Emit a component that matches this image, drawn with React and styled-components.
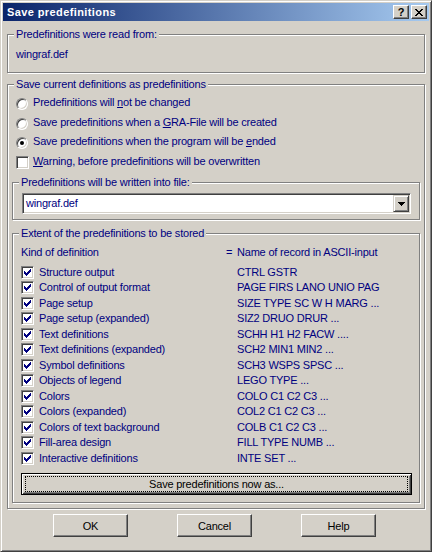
import React from 'react';
import styled, { createGlobalStyle } from 'styled-components';

const FACE = '#D4D0C8';
const NAVY = '#000080';
const FONT = '"Liberation Sans", Arial, sans-serif';

const Global = createGlobalStyle`
  html, body { margin: 0; padding: 0; background: ${FACE}; }
  body { font-family: ${FONT}; font-size: 11px; letter-spacing: -0.2px; }
  * { box-sizing: border-box; }
`;

const Window = styled.div`
  width: 432px;
  height: 552px;
  background: ${FACE};
  border: 1px solid;
  border-color: ${FACE} #404040 #404040 ${FACE};
  box-shadow: inset 1px 1px #fff, inset -1px -1px #808080;
  padding: 2px;
  display: flex;
  flex-direction: column;
`;

const TitleBar = styled.div`
  height: 18px;
  flex: none;
  display: flex;
  align-items: center;
  padding: 0 2px 0 4px;
  background: linear-gradient(to right, #0a246a, #a6caf0);
`;

const TitleText = styled.span`
  color: #fff;
  font-weight: bold;
  font-size: 11px;
  line-height: 18px;
  letter-spacing: 0.4px;
`;

const TitleButtons = styled.div`
  margin-left: auto;
  display: flex;
  gap: 2px;
`;

const TitleButton = styled.div`
  width: 16px;
  height: 14px;
  background: ${FACE};
  border: 1px solid;
  border-color: #fff #404040 #404040 #fff;
  box-shadow: inset -1px -1px #808080, inset 1px 1px ${FACE};
  display: flex;
  align-items: center;
  justify-content: center;
  color: #000;
  font-weight: bold;
  font-size: 11px;
  line-height: 12px;
  letter-spacing: 0;
`;

const Body = styled.div`
  flex: 1;
  display: flex;
  flex-direction: column;
  padding: 0 4px;
`;

const Group = styled.div`
  position: relative;
  margin-top: ${p => p.$mt}px;
  border: 1px solid #808080;
  box-shadow: inset 1px 1px #fff, 1px 1px #fff;
  padding: ${p => p.$pad};
  display: flex;
  flex-direction: column;
`;

const Legend = styled.span`
  position: absolute;
  top: -7px;
  left: 6px;
  padding: 0 2px;
  background: ${FACE};
  color: ${NAVY};
  line-height: 13px;
  white-space: nowrap;
`;

const Label = styled.span`
  color: ${NAVY};
  line-height: 13px;
  white-space: nowrap;
  u { text-decoration: underline; text-underline-offset: 1px; }
`;

const OptionRow = styled.div`
  height: 19.5px;
  display: flex;
  align-items: center;
  padding-left: 4px;
  gap: ${p => p.$gap || 5}px;
`;

const RadioCircle = styled.span`
  flex: none;
  width: 12px;
  height: 12px;
  margin-top: 3px;
  border-radius: 50%;
  background: #fff;
  border: 1px solid;
  border-color: #808080 #fff #fff #808080;
  box-shadow: inset 1px 1px #404040, inset -1px -1px ${FACE};
  display: flex;
  align-items: center;
  justify-content: center;
  &::after {
    content: '';
    width: 4px;
    height: 4px;
    border-radius: 50%;
    background: ${p => (p.$on ? '#000' : 'transparent')};
  }
`;

const CheckBoxFrame = styled.span`
  flex: none;
  width: 13px;
  height: 13px;
  margin-top: ${p => p.$mt || 0}px;
  background: #fff;
  border: 1px solid;
  border-color: #808080 #fff #fff #808080;
  box-shadow: inset 1px 1px #404040, inset -1px -1px ${FACE};
  display: flex;
  align-items: center;
  justify-content: center;
`;

const Combo = styled.div`
  height: 21px;
  display: flex;
  background: #fff;
  border: 1px solid;
  border-color: #808080 #fff #fff #808080;
  box-shadow: inset 1px 1px #404040, inset -1px -1px ${FACE};
  padding: 1px;
`;

const ComboText = styled.span`
  flex: 1;
  color: ${NAVY};
  line-height: 17px;
  padding-left: 2px;
`;

const DropButton = styled.span`
  flex: none;
  width: 16px;
  height: 17px;
  background: ${FACE};
  border: 1px solid;
  border-color: ${FACE} #404040 #404040 ${FACE};
  box-shadow: inset 1px 1px #fff, inset -1px -1px #808080;
  display: flex;
  align-items: center;
  justify-content: center;
`;

const Table = styled.div`
  display: grid;
  grid-template-columns: 205px 11px 1fr;
  grid-template-rows: 15.5px 4px;
  grid-auto-rows: 15.5px;
  align-items: center;
`;

const HeaderGap = styled.div`
  grid-column: 1 / -1;
  height: 4px;
`;

const Cell = styled.div`
  display: flex;
  align-items: center;
  gap: ${p => p.$gap || 0}px;
  color: ${NAVY};
  line-height: 13px;
  white-space: nowrap;
  grid-column: ${p => p.$col || 'auto'};
`;

const DefaultButton = styled.button`
  position: relative;
  margin-top: 7px;
  height: 22px;
  width: 100%;
  padding: 0;
  border: 1px solid #000;
  background: ${FACE};
  box-shadow: inset 1px 1px #fff, inset -1px -1px #404040,
    inset 2px 2px ${FACE}, inset -2px -2px #808080;
  font-family: ${FONT};
  font-size: 11px;
  letter-spacing: -0.2px;
  color: #000;
  &::after {
    content: '';
    position: absolute;
    inset: 2px 3px;
    border: 1px dotted #000;
  }
`;

const ButtonRow = styled.div`
  margin-top: 5px;
  margin-left: 46px;
  display: flex;
  gap: 49px;
`;

const PushButton = styled.button`
  width: 75px;
  height: 23px;
  padding: 0;
  background: ${FACE};
  border: 1px solid;
  border-color: #fff #404040 #404040 #fff;
  box-shadow: inset -1px -1px #808080, inset 1px 1px ${FACE};
  font-family: ${FONT};
  font-size: 11px;
  letter-spacing: -0.2px;
  color: #000;
`;

const Check = () => (
  <svg width="7" height="7" viewBox="0 0 7 7" shapeRendering="crispEdges">
    <path
      d="M0 2h1v3H0z M1 3h1v3H1z M2 4h1v3H2z M3 3h1v3H3z M4 2h1v3H4z M5 1h1v3H5z M6 0h1v3H6z"
      fill={NAVY}
    />
  </svg>
);

const CheckBox = ({ checked, mt }) => (
  <CheckBoxFrame $mt={mt}>{checked && <Check />}</CheckBoxFrame>
);

const CloseGlyph = () => (
  <svg width="8" height="7" viewBox="0 0 8 7" shapeRendering="crispEdges">
    <path
      d="M0 0h2v1H0z M6 0h2v1H6z M1 1h2v1H1z M5 1h2v1H5z M2 2h4v1H2z M3 3h2v1H3z M2 4h4v1H2z M1 5h2v1H1z M5 5h2v1H5z M0 6h2v1H0z M6 6h2v1H6z"
      fill="#000"
    />
  </svg>
);

const DownArrow = () => (
  <svg width="7" height="4" viewBox="0 0 7 4" shapeRendering="crispEdges">
    <path d="M0 0h7v1H0z M1 1h5v1H1z M2 2h3v1H2z M3 3h1v1H3z" fill="#000" />
  </svg>
);

const rows = [
  ['Structure output', 'CTRL GSTR'],
  ['Control of output format', 'PAGE FIRS LANO UNIO PAG'],
  ['Page setup', 'SIZE TYPE SC W H MARG ...'],
  ['Page setup (expanded)', 'SIZ2 DRUO DRUR ...'],
  ['Text definitions', 'SCHH H1 H2 FACW ....'],
  ['Text definitions (expanded)', 'SCH2 MIN1 MIN2 ...'],
  ['Symbol definitions', 'SCH3 WSPS SPSC ...'],
  ['Objects of legend', 'LEGO TYPE ...'],
  ['Colors', 'COLO C1 C2 C3 ...'],
  ['Colors (expanded)', 'COL2 C1 C2 C3 ...'],
  ['Colors of text background', 'COLB C1 C2 C3 ...'],
  ['Fill-area design', 'FILL TYPE NUMB ...'],
  ['Interactive definitions', 'INTE SET ...'],
];

export default function App() {
  return (
    <>
      <Global />
      <Window>
        <TitleBar>
          <TitleText>Save predefinitions</TitleText>
          <TitleButtons>
            <TitleButton>?</TitleButton>
            <TitleButton>
              <CloseGlyph />
            </TitleButton>
          </TitleButtons>
        </TitleBar>
        <Body>
          <Group $mt={13} $pad="13px 8px 11px 8px">
            <Legend>Predefinitions were read from:</Legend>
            <Label>wingraf.def</Label>
          </Group>

          <Group $mt={11} $pad="8px 4px 5px 4px">
            <Legend>Save current definitions as predefinitions</Legend>
            <OptionRow>
              <RadioCircle />
              <Label>
                Predefinitions will <u>n</u>ot be changed
              </Label>
            </OptionRow>
            <OptionRow>
              <RadioCircle />
              <Label>
                Save predefinitions when a <u>G</u>RA-File will be created
              </Label>
            </OptionRow>
            <OptionRow>
              <RadioCircle $on />
              <Label>
                Save predefinitions when the program will be <u>e</u>nded
              </Label>
            </OptionRow>
            <OptionRow $gap={4}>
              <CheckBox mt={2} />
              <Label>
                <u>W</u>arning, before predefinitions will be overwritten
              </Label>
            </OptionRow>

            <Group $mt={11} $pad="10px 8px 5px 9px">
              <Legend>Predefinitions will be written into file:</Legend>
              <Combo>
                <ComboText>wingraf.def</ComboText>
                <DropButton>
                  <DownArrow />
                </DropButton>
              </Combo>
            </Group>

            <Group $mt={13} $pad="11px 7px 7px 8px">
              <Legend>Extent of the predefinitions to be stored</Legend>
              <Table>
                <Cell>Kind of definition</Cell>
                <Cell>=</Cell>
                <Cell>Name of record in ASCII-input</Cell>
                <HeaderGap />
                {rows.map(([kind, code]) => (
                  <React.Fragment key={kind}>
                    <Cell $gap={5}>
                      <CheckBox checked />
                      <span>{kind}</span>
                    </Cell>
                    <Cell $col="3">{code}</Cell>
                  </React.Fragment>
                ))}
              </Table>
              <DefaultButton>Save predefinitions now as...</DefaultButton>
            </Group>
          </Group>

          <ButtonRow>
            <PushButton>OK</PushButton>
            <PushButton>Cancel</PushButton>
            <PushButton>Help</PushButton>
          </ButtonRow>
        </Body>
      </Window>
    </>
  );
}
